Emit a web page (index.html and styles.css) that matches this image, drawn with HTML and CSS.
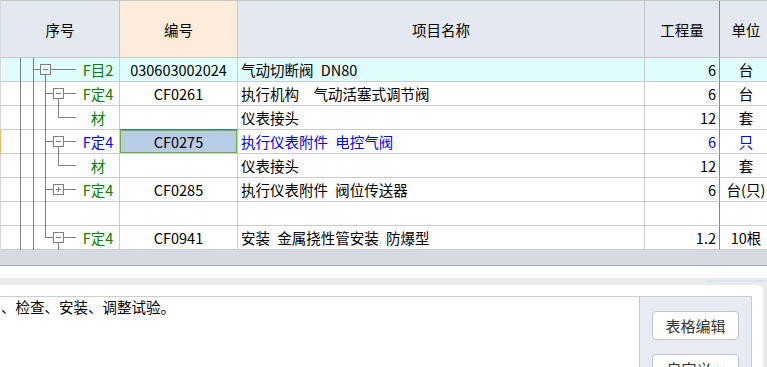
FILE: index.html
```html
<!DOCTYPE html>
<html lang="zh-CN">
<head>
<meta charset="utf-8">
<title>清单</title>
<link rel="stylesheet" href="styles.css">
</head>
<body>
<div class="grid">
  <div class="hdr">
    <div class="hcell">序号</div>
    <div class="hcell code">编号</div>
    <div class="hcell">项目名称</div>
    <div class="hcell qty">工程量</div>
    <div class="hcell">单位</div>
  </div>

  <div class="row hl">
    <div class="cell tree">
      <svg class="lines" width="75" height="24" viewBox="0 0 75 24"><path d="M19.5 0V24M32.5 0V24M32 11.5H39M50 11.5H75M44.5 17V24M42 11.5H47"/><rect x="39.5" y="6.5" width="10" height="10"/></svg>
      <span class="lbl green">F目2</span>
    </div>
    <div class="cell c">030603002024</div>
    <div class="cell name">气动切断阀&ensp;DN80</div>
    <div class="cell num">6</div>
    <div class="cell c">台</div>
  </div>

  <div class="row">
    <div class="cell tree">
      <svg class="lines" width="75" height="24" viewBox="0 0 75 24"><path d="M19.5 0V24M32.5 0V24M44.5 0V24M45 11.5H52M63 11.5H75M57.5 17V24M55 11.5H60"/><rect x="52.5" y="6.5" width="10" height="10"/></svg>
      <span class="lbl green">F定4</span>
    </div>
    <div class="cell c">CF0261</div>
    <div class="cell name">执行机构&ensp;&ensp;气动活塞式调节阀</div>
    <div class="cell num">6</div>
    <div class="cell c">台</div>
  </div>

  <div class="row">
    <div class="cell tree">
      <svg class="lines" width="75" height="24" viewBox="0 0 75 24"><path d="M19.5 0V24M32.5 0V24M44.5 0V24M57.5 0V11.5H75"/></svg>
      <span class="lbl green">材</span>
    </div>
    <div class="cell c above-sel"></div>
    <div class="cell name">仪表接头</div>
    <div class="cell num">12</div>
    <div class="cell c">套</div>
  </div>

  <div class="row cur">
    <div class="cell tree">
      <svg class="lines" width="75" height="24" viewBox="0 0 75 24"><path d="M19.5 0V24M32.5 0V24M44.5 0V24M45 11.5H52M63 11.5H75M57.5 17V24M55 11.5H60"/><rect x="52.5" y="6.5" width="10" height="10"/></svg>
      <span class="lbl blue">F定4</span>
    </div>
    <div class="cell c sel">CF0275</div>
    <div class="cell name blue">执行仪表附件&ensp;电控气阀</div>
    <div class="cell num blue">6</div>
    <div class="cell c blue">只</div>
  </div>

  <div class="row">
    <div class="cell tree">
      <svg class="lines" width="75" height="24" viewBox="0 0 75 24"><path d="M19.5 0V24M32.5 0V24M44.5 0V24M57.5 0V11.5H75"/></svg>
      <span class="lbl green">材</span>
    </div>
    <div class="cell c"></div>
    <div class="cell name">仪表接头</div>
    <div class="cell num">12</div>
    <div class="cell c">套</div>
  </div>

  <div class="row">
    <div class="cell tree">
      <svg class="lines" width="75" height="24" viewBox="0 0 75 24"><path d="M19.5 0V24M32.5 0V24M44.5 0V24M45 11.5H52M63 11.5H75M55 11.5H60M57.5 9V14"/><rect x="52.5" y="6.5" width="10" height="10"/></svg>
      <span class="lbl green">F定4</span>
    </div>
    <div class="cell c">CF0285</div>
    <div class="cell name">执行仪表附件&ensp;阀位传送器</div>
    <div class="cell num">6</div>
    <div class="cell c">台(只)</div>
  </div>

  <div class="row">
    <div class="cell tree">
      <svg class="lines" width="75" height="24" viewBox="0 0 75 24"><path d="M19.5 0V24M32.5 0V24M44.5 0V24"/></svg>
      <span class="lbl"></span>
    </div>
    <div class="cell c"></div>
    <div class="cell name"></div>
    <div class="cell num"></div>
    <div class="cell c"></div>
  </div>

  <div class="row">
    <div class="cell tree">
      <svg class="lines" width="75" height="24" viewBox="0 0 75 24"><path d="M19.5 0V24M32.5 0V24M44.5 0V11.5H52M63 11.5H75M57.5 17V24M55 11.5H60"/><rect x="52.5" y="6.5" width="10" height="10"/></svg>
      <span class="lbl green">F定4</span>
    </div>
    <div class="cell c">CF0941</div>
    <div class="cell name">安装&ensp;金属挠性管安装&ensp;防爆型</div>
    <div class="cell num">1.2</div>
    <div class="cell c">10根</div>
  </div>
</div>

<div class="hscroll"></div>
<div class="lower">
  <div class="spacer"></div>
  <div class="strip"><span class="tabline"></span></div>
  <div class="card">
    <div class="content">
      <div class="desc">、检查、安装、调整试验。</div>
      <div class="panel">
        <div class="btn">表格编辑</div>
        <div class="btn">自定义 <svg class="chev" width="9" height="6" viewBox="0 0 9 6"><path d="M1 1L4.5 4.5L8 1"/></svg></div>
      </div>
    </div>
  </div>
</div>
</body>
</html>
```

FILE: styles.css
```css
* { box-sizing: border-box; }

body {
  margin: 0;
  width: 767px;
  height: 367px;
  overflow: hidden;
  background: #ffffff;
  font-family: "Noto Sans CJK SC", "Noto Sans", sans-serif;
  font-size: 14.5px;
  color: #000;
}

.grid {
  width: 800px;
}

.hdr,
.row {
  display: grid;
  grid-template-columns: 119px 118px 407px 75px 53px;
  border-left: 1px solid #d6d6d6;
}

.hdr {
  height: 58px;
  background: #e4e9f1;
  border-top: 1px solid #c6c6c6;
  border-bottom: 1px solid #c6c6c6;
}

.hcell {
  display: flex;
  align-items: center;
  justify-content: center;
  border-right: 1px solid #c6c6c6;
}

.hcell.code { background: #fdebdc; }
.hcell.qty { border-right-color: #3cb07a; }

.row {
  height: 24px;
}

.row.hl { background: #e0fdfd; }
.row.cur { border-left-color: #f4b36e; }

.cell {
  border-right: 1px solid #cccccc;
  border-bottom: 1px solid #cccccc;
  line-height: 23px;
  white-space: nowrap;
}

.cell:nth-child(4) { border-right-color: #3cb07a; }

.cell.c { text-align: center; }
.cell.name { padding-left: 3px; overflow: hidden; }
.cell.num { text-align: right; padding-right: 3px; }

.tree {
  display: flex;
  align-items: flex-start;
}

.lines {
  flex: none;
  display: block;
  margin-bottom: -1px;
  fill: none;
  stroke: #7f7f7f;
  stroke-width: 1;
  shape-rendering: crispEdges;
}

.lbl {
  flex: 1;
  text-align: center;
  padding-left: 1px;
}

.green { color: #008000; }
.blue { color: #0000ff; }

.above-sel { border-bottom-color: #3a78d8; }

.sel {
  background: #b8cce6;
  box-shadow: inset 0 0 0 1px #70b13c;
}

.hscroll {
  height: 16px;
  background: #d6dae1;
  border-bottom: 1px solid #a9acb1;
}

.lower {
  background: #ebebeb;
  height: 101px;
}

.spacer {
  height: 12px;
  background: #ffffff;
}

.strip {
  height: 7px;
  display: flex;
  justify-content: flex-end;
}

.tabline {
  width: 60px;
  height: 2px;
  margin-top: 2px;
  background: #d3e5f7;
}

.card {
  background: #ffffff;
  margin-right: 4px;
  border-top-right-radius: 6px;
  padding-top: 11px;
  height: 82px;
}

.content {
  display: flex;
  width: 752px;
  border-top: 1px solid #cdcdcd;
  height: 71px;
}

.desc {
  width: 639px;
  line-height: 20px;
  padding-left: 1px;
  white-space: nowrap;
}

.panel {
  width: 113px;
  background: #e8ebf3;
  border-left: 1px solid #c8c8c8;
  border-right: 1px solid #c8c8c8;
  padding: 14px 0 0 12px;
  display: flex;
  flex-direction: column;
  gap: 14px;
}

.btn {
  flex: none;
  width: 87px;
  height: 29px;
  border: 1px solid #c4c4c4;
  border-radius: 4px;
  background: #ffffff;
  color: #333333;
  font-size: 15px;
  display: flex;
  align-items: center;
  justify-content: center;
  gap: 4px;
}

.chev {
  fill: none;
  stroke: #555;
  stroke-width: 1.2;
}
```
